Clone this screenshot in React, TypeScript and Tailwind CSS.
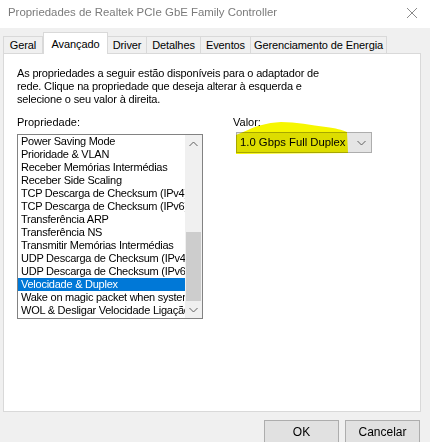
const items = [
  "Power Saving Mode",
  "Prioridade & VLAN",
  "Receber Memórias Intermédias",
  "Receber Side Scaling",
  "TCP Descarga de Checksum (IPv4)",
  "TCP Descarga de Checksum (IPv6)",
  "Transferência ARP",
  "Transferência NS",
  "Transmitir Memórias Intermédias",
  "UDP Descarga de Checksum (IPv4)",
  "UDP Descarga de Checksum (IPv6)",
  "Velocidade & Duplex",
  "Wake on magic packet when system is in S0ix power state",
  "WOL & Desligar Velocidade Ligação",
];

const tabs = [
  { label: "Geral", w: "w-[40px]" },
  { label: "Avançado", w: "w-[65px]", active: true },
  { label: "Driver", w: "w-[40px]" },
  { label: "Detalhes", w: "w-[55px]" },
  { label: "Eventos", w: "w-[51px]" },
  { label: "Gerenciamento de Energia", w: "w-[137px]" },
];

function Chevron({ up = false }: { up?: boolean }) {
  return (
    <svg width="9" height="6" viewBox="0 0 9 6">
      <path
        d={up ? "M0.5 5 L4.5 1 L8.5 5" : "M0.5 1 L4.5 5 L8.5 1"}
        fill="none"
        stroke="#606060"
        strokeWidth="1"
      />
    </svg>
  );
}

export default function App() {
  return (
    <div className="relative h-[442px] w-[430px] overflow-hidden bg-[#f0f0f0] font-['Liberation_Sans',Arial,sans-serif] text-[11px] text-black">
      {/* Title bar */}
      <div className="flex h-[28px] items-center justify-between bg-white pb-[3px] pl-[8px] pr-[13px]">
        <span className="text-[11.4px] text-[#7a7a7a]">
          Propriedades de Realtek PCIe GbE Family Controller
        </span>
        <svg width="10" height="10" viewBox="0 0 10 10">
          <path d="M0 0 L10 10 M10 0 L0 10" stroke="#8a8a8a" strokeWidth="1" />
        </svg>
      </div>

      {/* Tabs */}
      <div className="relative z-10 flex h-[25px] items-end pl-[3px] tracking-[-0.1px]">
        {tabs.map((t) =>
          t.active ? (
            <div
              key={t.label}
              className={`${t.w} -mb-px flex h-[22px] items-start justify-center border border-b-0 border-[#d9d9d9] bg-white pt-[3px]`}
            >
              {t.label}
            </div>
          ) : (
            <div
              key={t.label}
              className={`${t.w} -ml-px flex h-[17px] items-center justify-center whitespace-nowrap border border-b-0 border-[#d9d9d9] bg-[#f0f0f0] first:ml-0`}
            >
              {t.label}
            </div>
          )
        )}
      </div>

      {/* Panel */}
      <div className="ml-[3px] h-[359px] w-[418px] border border-[#d9d9d9] bg-white pl-[13px] pt-[13px]">
        <div className="leading-[13px] tracking-[-0.17px]">
          <div>As propriedades a seguir estão disponíveis para o adaptador de</div>
          <div>rede. Clique na propriedade que deseja alterar à esquerda e</div>
          <div>selecione o seu valor à direita.</div>
        </div>

        <div className="mt-[10px] flex gap-[30px]">
          <div className="flex w-[186px] flex-col">
            <span className="leading-[13px]">Propriedade:</span>
            <div className="mt-[5px] flex h-[185px] border border-[#828282] bg-white">
              <div className="flex-1 overflow-hidden tracking-[-0.25px]">
                {items.map((it) => (
                  <div
                    key={it}
                    className={`h-[13px] whitespace-nowrap pl-[3px] leading-[13px] ${
                      it === "Velocidade & Duplex" ? "bg-[#0078d7] text-white" : ""
                    }`}
                  >
                    {it}
                  </div>
                ))}
              </div>
              <div className="flex w-[17px] flex-col bg-[#f0f0f0]">
                <div className="flex h-[17px] items-center justify-center">
                  <Chevron up />
                </div>
                <div className="flex flex-1 flex-col justify-end">
                  <div className="mx-px h-[69px] bg-[#cdcdcd]" />
                </div>
                <div className="flex h-[17px] items-center justify-center">
                  <Chevron />
                </div>
              </div>
            </div>
          </div>

          <div className="flex flex-col">
            <span className="leading-[13px]">Valor:</span>
            <div className="relative ml-[3px] mt-[3px] flex h-[21px] w-[136px] items-center justify-between border border-[#adadad] bg-[#e5e5e5] pl-[3px] pr-[5px] text-[11.3px]">
              <span>1.0 Gbps Full Duplex</span>
              <Chevron />
              <svg
                className="pointer-events-none absolute left-[-1px] top-[-11px] mix-blend-multiply"
                width="114"
                height="33"
                viewBox="0 0 114 33"
              >
                <path
                  d="M0 13 C4 11 8 10 12 8 C20 4 30 1 45 0 C60 0 75 3 90 5 C100 6 106 8 111 10 L112 31 L0 32 Z"
                  fill="#f6f600"
                />
              </svg>
            </div>
          </div>
        </div>
      </div>

      {/* Buttons */}
      <div className="mt-[8px] flex justify-end gap-[6px] pr-[10px]">
        <button className="h-[23px] w-[75px] border border-[#adadad] bg-[#e1e1e1] text-[12px]">
          OK
        </button>
        <button className="h-[23px] w-[75px] border border-[#adadad] bg-[#e1e1e1] text-[12px]">
          Cancelar
        </button>
      </div>
    </div>
  );
}
